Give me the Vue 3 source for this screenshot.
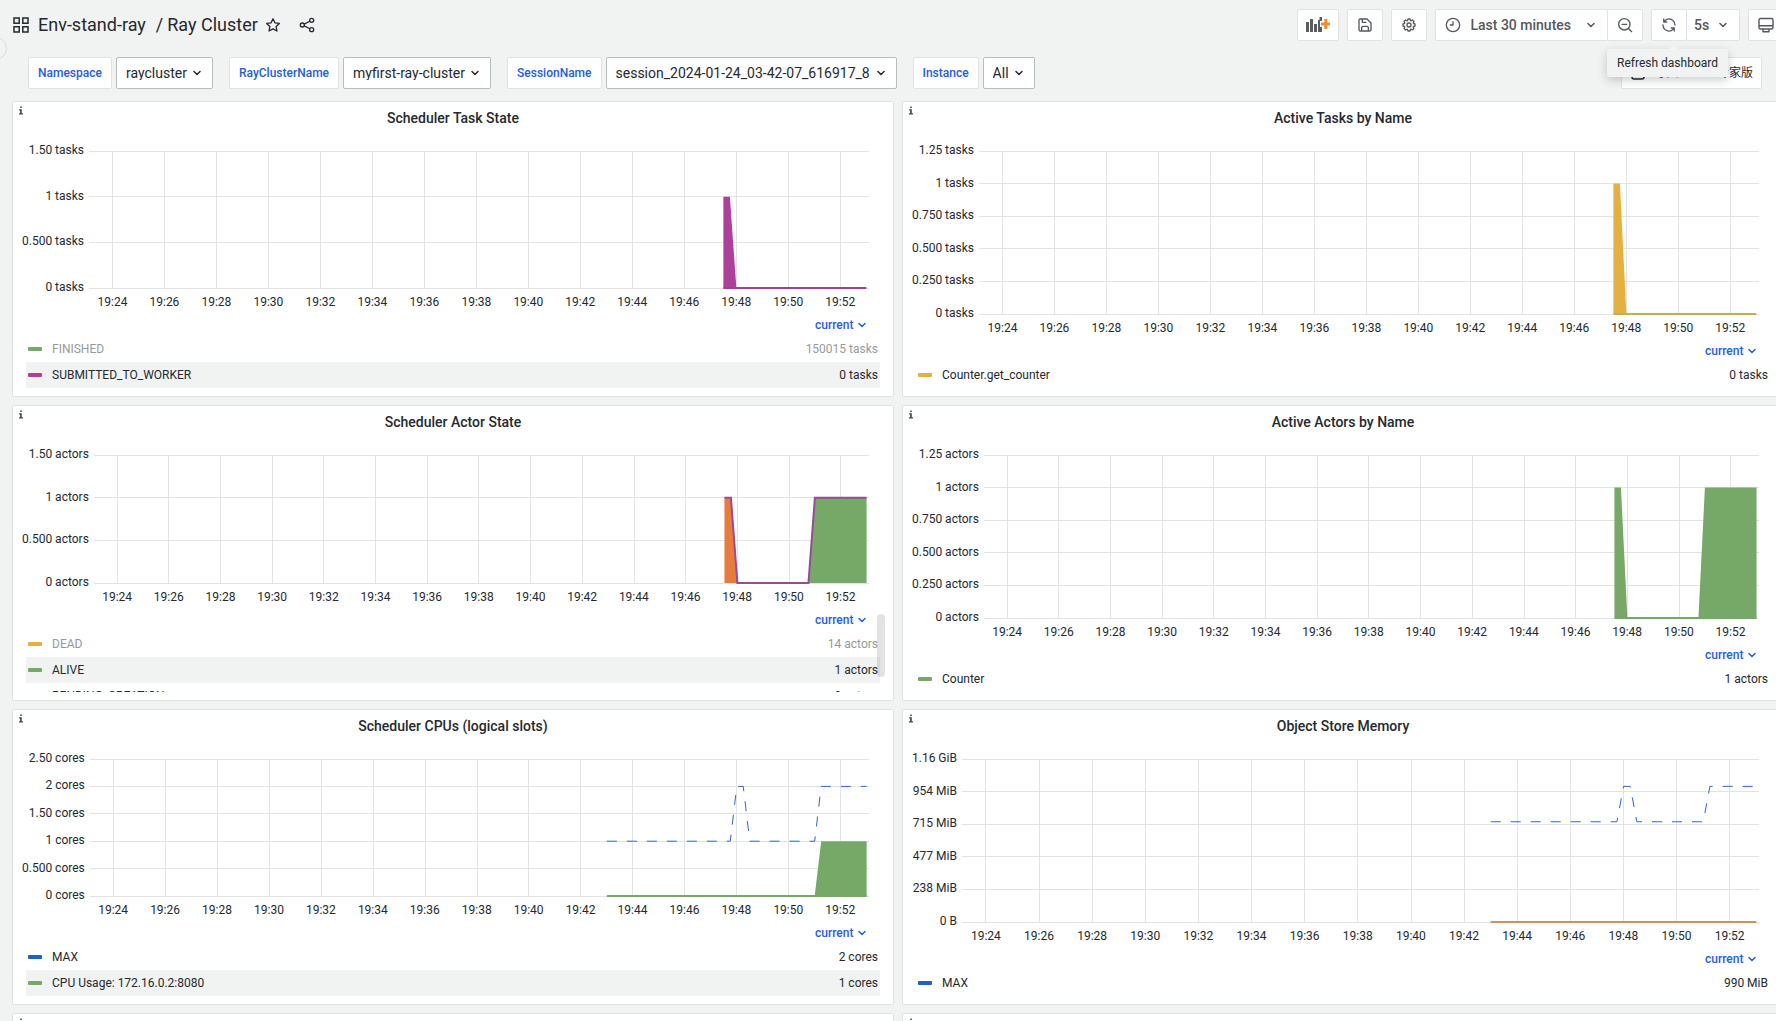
<script setup>
const ticks = Array.from({ length: 15 }, (_, i) => ({
  label: `19:${24 + i * 2}`,
  at: `${3 + (i * 100) / 15}%`,
}))

const GREEN = '#76a968'
const PURPLE = '#ad409b'
const YELLOW = '#e4b042'
const ORANGE = '#e87c3e'
const BLUE = '#2f66cc'

// Series points are [minutes since range start, fraction of the axis maximum]
const panels = [
  {
    title: 'Scheduler Task State',
    y: ['1.50 tasks', '1 tasks', '0.500 tasks', '0 tasks'],
    areas: [{ color: PURPLE, points: [[24.4, 0], [24.4, 2 / 3], [24.65, 2 / 3], [24.9, 0]] }],
    lines: [{ color: '#9d4190', points: [[24.4, 0], [29.9, 0]], width: 2 }],
    legend: [
      { name: 'FINISHED', value: '150015 tasks', color: GREEN, off: true },
      { name: 'SUBMITTED_TO_WORKER', value: '0 tasks', color: PURPLE },
    ],
  },
  {
    title: 'Active Tasks by Name',
    y: ['1.25 tasks', '1 tasks', '0.750 tasks', '0.500 tasks', '0.250 tasks', '0 tasks'],
    areas: [{ color: YELLOW, points: [[24.4, 0], [24.4, 0.8], [24.65, 0.8], [24.9, 0]] }],
    lines: [{ color: '#c8ad4c', points: [[24.4, 0], [29.9, 0]], width: 2 }],
    legend: [{ name: 'Counter.get_counter', value: '0 tasks', color: YELLOW }],
  },
  {
    title: 'Scheduler Actor State',
    y: ['1.50 actors', '1 actors', '0.500 actors', '0 actors'],
    areas: [
      { color: ORANGE, points: [[24.4, 0], [24.4, 2 / 3], [24.65, 2 / 3], [24.9, 0]] },
      { color: GREEN, points: [[27.65, 0], [27.9, 2 / 3], [29.9, 2 / 3], [29.9, 0]] },
    ],
    lines: [
      {
        color: '#994a98',
        points: [[24.4, 2 / 3], [24.65, 2 / 3], [24.9, 0], [27.65, 0], [27.9, 2 / 3], [29.9, 2 / 3]],
        width: 2,
      },
    ],
    legend: [
      { name: 'DEAD', value: '14 actors', color: YELLOW, off: true },
      { name: 'ALIVE', value: '1 actors', color: GREEN },
      { name: 'PENDING_CREATION', value: '0 actors', color: BLUE },
    ],
    scroll: true,
  },
  {
    title: 'Active Actors by Name',
    y: ['1.25 actors', '1 actors', '0.750 actors', '0.500 actors', '0.250 actors', '0 actors'],
    areas: [
      { color: GREEN, points: [[24.4, 0], [24.4, 0.8], [24.65, 0.8], [24.9, 0]] },
      { color: GREEN, points: [[27.65, 0], [27.9, 0.8], [29.9, 0.8], [29.9, 0]] },
    ],
    lines: [{ color: GREEN, points: [[24.4, 0], [29.9, 0]], width: 2 }],
    legend: [{ name: 'Counter', value: '1 actors', color: GREEN }],
  },
  {
    title: 'Scheduler CPUs (logical slots)',
    y: ['2.50 cores', '2 cores', '1.50 cores', '1 cores', '0.500 cores', '0 cores'],
    areas: [{ color: GREEN, points: [[27.9, 0], [28.15, 0.4], [29.9, 0.4], [29.9, 0]] }],
    lines: [
      { color: GREEN, points: [[19.9, 0], [29.9, 0]], width: 2 },
      {
        color: BLUE,
        points: [[19.9, 0.4], [24.65, 0.4], [24.9, 0.8], [25.15, 0.8], [25.4, 0.4], [27.9, 0.4], [28.15, 0.8], [29.9, 0.8]],
        width: 1,
        dash: '10 10',
      },
    ],
    legend: [
      { name: 'MAX', value: '2 cores', color: '#1f60c4' },
      { name: 'CPU Usage: 172.16.0.2:8080', value: '1 cores', color: GREEN },
    ],
  },
  {
    title: 'Object Store Memory',
    y: ['1.16 GiB', '954 MiB', '715 MiB', '477 MiB', '238 MiB', '0 B'],
    areas: [],
    lines: [
      { color: '#cf925a', points: [[19.9, 0], [29.9, 0]], width: 2 },
      {
        color: BLUE,
        points: [[19.9, 0.615], [24.65, 0.615], [24.9, 0.832], [25.15, 0.832], [25.4, 0.615], [27.9, 0.615], [28.15, 0.832], [29.9, 0.832]],
        width: 1,
        dash: '10 10',
      },
    ],
    legend: [{ name: 'MAX', value: '990 MiB', color: '#1f60c4' }],
  },
]

const variables = [
  { id: 'namespace', label: 'Namespace', value: 'raycluster' },
  { id: 'cluster', label: 'RayClusterName', value: 'myfirst-ray-cluster' },
  { id: 'session', label: 'SessionName', value: 'session_2024-01-24_03-42-07_616917_8' },
  { id: 'instance', label: 'Instance', value: 'All' },
]

const toPoints = (points) => points.map(([x, y]) => `${x},${1 - y}`).join(' ')
</script>

<template>
  <div class="page">
    <button class="drawer" aria-label="Expand menu"></button>

    <header class="topbar">
      <h1 class="crumbs">
        <svg class="ico" viewBox="0 0 16 16" fill="none" stroke="currentColor" stroke-width="1.5">
          <path d="M1 1h5.2v5.2H1zM9.8 1H15v5.2H9.8zM1 9.8h5.2V15H1zM9.8 9.8H15V15H9.8z" />
        </svg>
        <a href="#">Env-stand-ray</a>
        <span class="slash">/</span>
        <a href="#">Ray Cluster</a>
      </h1>
      <button class="plain" aria-label="Mark as favorite">
        <svg class="ico" viewBox="0 0 24 24" fill="none" stroke="currentColor" stroke-width="2" stroke-linejoin="round">
          <path d="M12 2.6l2.9 6.1 6.6.9-4.8 4.7 1.2 6.7-5.9-3.2L6.1 21l1.2-6.7L2.5 9.6l6.6-.9z" />
        </svg>
      </button>
      <button class="plain share" aria-label="Share dashboard">
        <svg class="ico" viewBox="0 0 24 24" fill="none" stroke="currentColor" stroke-width="2">
          <circle cx="5" cy="12" r="3" />
          <circle cx="19" cy="5" r="3" />
          <circle cx="19" cy="19" r="3" />
          <path d="M7.7 10.7l8.6-4.3M7.7 13.3l8.6 4.3" />
        </svg>
      </button>

      <nav class="tools">
        <button class="tool add" aria-label="Add panel">
          <svg width="24" height="16" viewBox="0 0 24 16">
            <path fill="#5a5c60" d="M0 5h3v10H0zM4 2h3v13H4zM8 7h3v8H8zM12 3h1.5V0H16v4h-2v6h2v5h-4z" />
            <path fill="#f08c2e" d="M18.3 2h3v3.5H24v3h-2.700V12h-3V8.500H15v-3h3.300z" />
          </svg>
        </button>
        <button class="tool" aria-label="Save dashboard">
          <svg class="ico" viewBox="0 0 24 24" fill="none" stroke="currentColor" stroke-width="2" stroke-linejoin="round">
            <path d="M3 5a2 2 0 0 1 2-2h10l6 6v10a2 2 0 0 1-2 2H5a2 2 0 0 1-2-2zM8 3v5h6M7 21v-5a2 2 0 0 1 2-2h6a2 2 0 0 1 2 2v5" />
          </svg>
        </button>
        <button class="tool" aria-label="Dashboard settings">
          <svg class="ico" viewBox="0 0 24 24" fill="currentColor">
            <path d="M21.320,9.550l-1.890-.63.89-1.780A1,1,0,0,0,20.130,6L18,3.870a1,1,0,0,0-1.150-.19l-1.780.89-.63-1.890A1,1,0,0,0,13.500,2h-3a1,1,0,0,0-.95.68L8.920,4.570,7.140,3.680A1,1,0,0,0,6,3.870L3.870,6a1,1,0,0,0-.19,1.150l.89,1.780-1.890.63A1,1,0,0,0,2,10.500v3a1,1,0,0,0,.68.95l1.890.63-.89,1.780A1,1,0,0,0,3.870,18L6,20.130a1,1,0,0,0,1.150.19l1.780-.89.63,1.890a1,1,0,0,0,.95.68h3a1,1,0,0,0,.95-.68l.63-1.890,1.780.89A1,1,0,0,0,18,20.130L20.130,18a1,1,0,0,0,.19-1.150l-.89-1.780,1.890-.63A1,1,0,0,0,22,13.500v-3A1,1,0,0,0,21.320,9.550ZM20,12.780l-1.200.4A2,2,0,0,0,17.640,16l.57,1.140-1.100,1.100L16,17.640a2,2,0,0,0-2.790,1.160l-.4,1.200H11.220l-.4-1.200A2,2,0,0,0,8,17.640l-1.140.57-1.100-1.100L6.360,16A2,2,0,0,0,5.200,13.180L4,12.780V11.220l1.200-.4A2,2,0,0,0,6.360,8L5.790,6.890l1.100-1.100L8,6.360A2,2,0,0,0,10.820,5.200l.4-1.200h1.560l.4,1.200A2,2,0,0,0,16,6.360l1.140-.57,1.100,1.100L17.640,8a2,2,0,0,0,1.160,2.790l1.200.4ZM12,8a4,4,0,1,0,4,4A4,4,0,0,0,12,8Zm0,6a2,2,0,1,1,2-2A2,2,0,0,1,12,14Z" />
          </svg>
        </button>
        <div class="group">
          <button class="tool range">
            <svg class="ico" viewBox="0 0 24 24" fill="none" stroke="currentColor" stroke-width="2" stroke-linecap="round" stroke-linejoin="round">
              <circle cx="12" cy="12" r="10" />
              <path d="M12 7v5H8" />
            </svg>
            <span>Last 30 minutes</span>
            <svg class="chev" viewBox="0 0 8 8"><path d="M1 2.5l3 3 3-3" /></svg>
          </button>
          <button class="tool" aria-label="Zoom out time range">
            <svg class="ico" viewBox="0 0 24 24" fill="none" stroke="currentColor" stroke-width="2" stroke-linecap="round">
              <circle cx="11" cy="11" r="8.5" />
              <path d="M7.5 11h7M17.5 17.5L22 22" />
            </svg>
          </button>
        </div>
        <div class="group">
          <div class="anchor">
            <button class="tool" aria-label="Refresh dashboard">
              <svg class="ico" viewBox="0 0 24 24" fill="currentColor">
                <path d="M19.910,15.510H15.380a1,1,0,0,0,0,2h2.400A8,8,0,0,1,4,12a1,1,0,0,0-2,0,10,10,0,0,0,16.880,7.230V21a1,1,0,0,0,2,0V16.500A1,1,0,0,0,19.910,15.510ZM12,2A10,10,0,0,0,5.120,4.770V3a1,1,0,0,0-2,0V7.500a1,1,0,0,0,1,1h4.500a1,1,0,0,0,0-2H6.220A8,8,0,0,1,20,12a1,1,0,0,0,2,0A10,10,0,0,0,12,2Z" />
              </svg>
            </button>
            <div class="tooltip" role="tooltip">Refresh dashboard</div>
          </div>
          <div class="pick interval">
            <select aria-label="Refresh interval"><option>5s</option></select>
            <svg class="chev" viewBox="0 0 8 8"><path d="M1 2.5l3 3 3-3" /></svg>
          </div>
        </div>
        <button class="tool" aria-label="Cycle view mode">
          <svg class="ico" viewBox="0 0 16 16" fill="none" stroke="currentColor" stroke-width="1.4" stroke-linejoin="round">
            <rect x="1" y="1.5" width="14" height="10.5" rx="1.5" />
            <path d="M1 8.7h14M5 12v2.7h6V12" />
          </svg>
        </button>
      </nav>
    </header>

    <section class="filters">
      <div v-for="v in variables" :key="v.id" class="filter">
        <label :for="v.id">{{ v.label }}</label>
        <div class="pick">
          <select :id="v.id"><option>{{ v.value }}</option></select>
          <svg class="chev" viewBox="0 0 8 8"><path d="M1 2.5l3 3 3-3" /></svg>
        </div>
      </div>
      <a class="pro" href="#">
        <svg class="ico" viewBox="0 0 16 16" fill="none" stroke="currentColor" stroke-width="1.5">
          <rect x="2" y="1" width="12" height="13" rx="2" />
          <path d="M2 10.5h12" />
        </svg>
        <span>导入 ARMS 专家版</span>
      </a>
    </section>

    <main class="board">
      <article v-for="p in panels" :key="p.title" class="panel">
        <svg class="info" viewBox="0 0 5 10"><path d="M1.500 0h2v2h-2zM0 3.500h3.500V8.500H5V10H0V8.500h1.300V5H0z" /></svg>
        <h2>{{ p.title }}</h2>
        <div class="chart">
          <div class="yaxis"><span v-for="l in p.y" :key="l">{{ l }}</span></div>
          <svg class="plot">
            <g class="grid">
              <line v-for="(l, i) in p.y" :key="l" x1="0" x2="100%" :y1="`${(i * 100) / (p.y.length - 1)}%`" :y2="`${(i * 100) / (p.y.length - 1)}%`" />
              <line v-for="t in ticks" :key="t.label" :x1="t.at" :x2="t.at" y1="0" y2="100%" />
            </g>
            <svg class="data" viewBox="0 0 30 1" preserveAspectRatio="none" width="100%" height="100%">
              <polygon v-for="(a, i) in p.areas" :key="i" :points="toPoints(a.points)" :fill="a.color" />
              <polyline v-for="(s, i) in p.lines" :key="i" :points="toPoints(s.points)" :stroke="s.color" :stroke-width="s.width" :stroke-dasharray="s.dash" />
            </svg>
          </svg>
          <div class="xaxis"><span v-for="t in ticks" :key="t.label">{{ t.label }}</span></div>
        </div>
        <div class="legend" :class="{ clipped: p.scroll }">
          <table>
            <thead>
              <tr>
                <th></th>
                <th>
                  <div class="pick stat">
                    <select aria-label="Legend value"><option>current</option></select>
                    <svg class="chev" viewBox="0 0 8 8"><path d="M1 2.5l3 3 3-3" /></svg>
                  </div>
                </th>
              </tr>
            </thead>
            <tbody>
              <tr v-for="s in p.legend" :key="s.name" :class="{ off: s.off }">
                <td><i class="swatch" :style="{ background: s.color }"></i>{{ s.name }}</td>
                <td>{{ s.value }}</td>
              </tr>
            </tbody>
          </table>
        </div>
        <div v-if="p.scroll" class="thumb"></div>
      </article>
      <article v-for="n in 2" :key="n" class="panel">
        <svg class="info" viewBox="0 0 5 10"><path d="M1.500 0h2v2h-2zM0 3.500h3.500V8.500H5V10H0V8.500h1.300V5H0z" /></svg>
      </article>
    </main>
  </div>
</template>

<style>
html,
body {
  margin: 0;
  background: #f1f3f3;
}
</style>

<style scoped>
.page {
  position: relative;
  height: 100vh;
  overflow: hidden;
  box-sizing: border-box;
  background: #f1f3f3;
  color: #24292e;
  font: 12px/14px Roboto, "Noto Sans CJK SC", sans-serif;
}
button,
select {
  font: inherit;
  color: inherit;
  margin: 0;
  padding: 0;
  border: 0;
  background: none;
}
a {
  color: inherit;
  text-decoration: none;
}
.ico {
  width: 16px;
  height: 16px;
  flex: none;
  display: block;
}
.chev {
  width: 8px;
  height: 8px;
  flex: none;
  fill: none;
  stroke: currentColor;
  stroke-width: 1.5;
  stroke-linecap: round;
  stroke-linejoin: round;
}
.drawer {
  position: absolute;
  left: -16px;
  top: 37px;
  width: 23px;
  height: 23px;
  border: 1px solid #d9dbdb;
  border-radius: 50%;
  box-sizing: border-box;
}
.topbar {
  display: flex;
  align-items: center;
  height: 50px;
  padding-left: 13px;
  margin-right: -8px;
}
.crumbs {
  display: flex;
  align-items: center;
  margin: 0;
  font-size: 18px;
  line-height: 24px;
  font-weight: 400;
}
.crumbs .ico {
  margin-right: 9px;
}
.slash {
  margin: 0 4px 0 10px;
}
.plain {
  margin-left: 7px;
}
.share {
  margin-left: 18px;
}
.tools {
  display: flex;
  gap: 8px;
  margin-left: auto;
  color: #55585c;
  font-size: 14px;
  font-weight: 500;
}
.group {
  display: flex;
}
.tool,
.interval {
  box-sizing: border-box;
  height: 32px;
  min-width: 36px;
  border: 1px solid #e1e2e3;
  border-radius: 2px;
  background: #fff;
}
.tool {
  display: flex;
  align-items: center;
  justify-content: center;
}
.group > :last-child {
  margin-left: -1px;
}
.add {
  width: 42px;
}
.range {
  padding: 0 12px 0 9px;
}
.range span {
  margin: 0 16px 0 9px;
}
.anchor {
  position: relative;
}
.tooltip {
  position: absolute;
  z-index: 2;
  top: 40px;
  right: -41px;
  padding: 7px 10px;
  border-radius: 2px;
  background: #f1f3f3;
  color: #24292e;
  font-size: 12px;
  font-weight: 400;
  white-space: nowrap;
  box-shadow: 0 3px 10px rgba(24, 26, 27, 0.22);
}
.tooltip::before {
  content: "";
  position: absolute;
  top: -5px;
  left: 50%;
  border: 6px solid transparent;
  border-top: 0;
  border-bottom-color: #f1f3f3;
}
.pick {
  display: inline-grid;
  align-items: center;
}
.pick select,
.pick .chev {
  grid-area: 1 / 1;
}
.pick .chev {
  justify-self: end;
  pointer-events: none;
}
.pick select {
  appearance: none;
  height: 100%;
}
.interval select {
  padding: 0 29px 0 7px;
}
.interval .chev {
  margin-right: 12px;
}
.filters {
  display: flex;
  gap: 16px;
  padding: 7px 14px 12px 28px;
}
.filter {
  display: flex;
  gap: 4px;
}
.filter label,
.filter .pick,
.pro {
  box-sizing: border-box;
  height: 32px;
  border: 1px solid #e1e2e3;
  border-radius: 2px;
  background: #fff;
}
.filter label {
  padding: 8px 9px;
  color: #245edb;
  font-weight: 500;
}
.filter .pick {
  border-color: #b9bcbd;
  font-size: 14px;
}
.filter select {
  padding: 0 25px 0 9px;
}
.filter .chev {
  margin-right: 11px;
}
.pro {
  display: flex;
  align-items: center;
  gap: 8px;
  margin-left: auto;
  padding: 0 8px;
}
.board {
  display: grid;
  grid-template-columns: 1fr 1fr;
  grid-auto-rows: 296px;
  gap: 8px;
  margin: 0 -8px 0 12px;
}
.panel {
  position: relative;
  display: flex;
  flex-direction: column;
  box-sizing: border-box;
  min-width: 0;
  padding-bottom: 8px;
  border: 1px solid #e1e2e3;
  border-radius: 2px;
  background: #fff;
}
.info {
  position: absolute;
  left: 6px;
  top: 4px;
  width: 4px;
  height: 9px;
  fill: #4c4f52;
}
.panel h2 {
  margin: 6px 0 23px;
  font-size: 14px;
  line-height: 20px;
  font-weight: 500;
  text-align: center;
}
.chart {
  flex: 1;
  min-height: 0;
  display: grid;
  grid-template: minmax(0, 1fr) 26px / auto 1fr;
  padding: 0 24px 0 9px;
}
.yaxis {
  display: flex;
  flex-direction: column;
  justify-content: space-between;
  margin: -8px 5px -6px 0;
  text-align: right;
}
.plot {
  width: 100%;
  height: 100%;
  overflow: visible;
}
.grid line {
  stroke: #e2e3e3;
  shape-rendering: crispEdges;
}
.data {
  overflow: visible;
}
.data polyline {
  fill: none;
  vector-effect: non-scaling-stroke;
}
.xaxis {
  grid-column: 2;
  display: flex;
  margin: 0 0.3333% 0 -0.3333%;
  padding-top: 7px;
}
.xaxis span {
  flex: 0 0 6.6667%;
  text-align: center;
}
.legend {
  margin: 0 13px;
}
.clipped {
  height: 83px;
  overflow: hidden;
}
.legend table {
  width: 100%;
  border-collapse: collapse;
}
.legend th,
.legend td {
  padding: 0 2px;
  text-align: left;
  white-space: nowrap;
}
.legend th {
  height: 22px;
}
.legend td {
  height: 26px;
}
.legend th:last-child,
.legend td:last-child {
  text-align: right;
}
.legend tbody tr:nth-child(even) {
  background: #f1f3f3;
}
.off {
  color: #96999b;
}
.swatch {
  display: inline-block;
  width: 14px;
  height: 4px;
  margin-right: 10px;
  border-radius: 1px;
  vertical-align: 2px;
}
.stat {
  margin-right: 12px;
  color: #245edb;
  font-weight: 500;
  vertical-align: middle;
}
.stat select {
  padding-right: 12px;
}
.thumb {
  position: absolute;
  right: 8px;
  bottom: 23px;
  width: 8px;
  height: 63px;
  border-radius: 4px;
  background: rgba(0, 0, 0, 0.11);
}
</style>
